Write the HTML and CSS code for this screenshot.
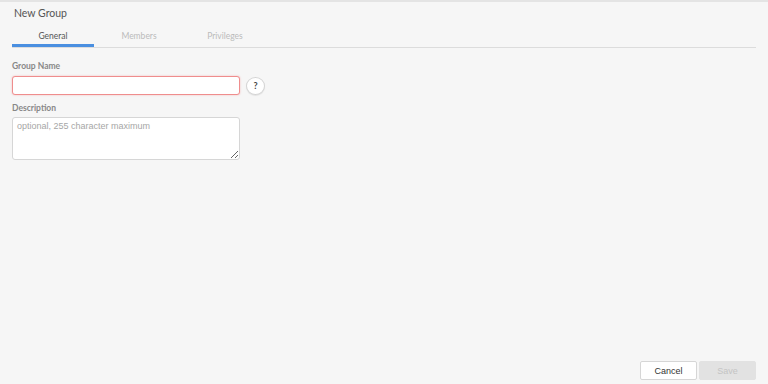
FILE: index.html
```html
<!DOCTYPE html>
<html lang="en">
  <head>
    <meta charset="UTF-8" />
    <meta name="viewport" content="width=device-width, initial-scale=1.0" />
    <title>New Group</title>
    <link rel="stylesheet" href="styles.css">
  </head>

  <body>
    <div class="dialog">
      <div class="header">
        <h1>New Group</h1>
        <div class="tabs">
          <span class="tab active">General</span>
          <span class="tab">Members</span>
          <span class="tab">Privileges</span>
        </div>
      </div>

      <div class="form">
        <label class="field-label" for="group-name">Group Name</label>
        <div class="field-row">
          <input type="text" id="group-name" class="text-input invalid" />
          <button class="help-btn" type="button">?</button>
        </div>

        <label class="field-label" for="description">Description</label>
        <textarea id="description" class="text-area" placeholder="optional, 255 character maximum"></textarea>
      </div>

      <div class="footer">
        <button class="btn" type="button">Cancel</button>
        <button class="btn btn-save" type="button" disabled>Save</button>
      </div>
    </div>
  </body>
</html>
```

FILE: styles.css
```css
html,
body {
  height: 100%;
}

body {
  margin: 0;
  padding: 0;
  background-color: #f6f6f6;
  font-family: "Lato", "Liberation Sans", sans-serif;
}

.dialog {
  box-sizing: border-box;
  height: 100%;
  border-top: 2px solid #e4e4e4;
  display: flex;
  flex-direction: column;
}

.header {
  padding: 4px 12px 0 12px;
}

h1 {
  margin: 0 0 0 2px;
  font-size: 10.5px;
  font-weight: normal;
  color: #555;
  line-height: 14px;
}

.tabs {
  display: flex;
  gap: 4px;
  margin-top: 10px;
  border-bottom: 1px solid #dcdcdc;
}

.tab {
  width: 82px;
  text-align: center;
  font-size: 8.5px;
  color: #bbb;
  line-height: 12px;
  padding-bottom: 2px;
  border-bottom: 3px solid transparent;
}

.tab.active {
  color: #555;
  border-bottom-color: #4a8fe0;
}

.form {
  flex: 1;
  display: flex;
  flex-direction: column;
  align-items: flex-start;
  padding: 12px 12px 0 12px;
}

.field-label {
  font-size: 8.5px;
  font-weight: bold;
  color: #888;
  line-height: 12px;
  margin-bottom: 4px;
}

.field-row {
  display: flex;
  align-items: center;
  gap: 6px;
  margin-bottom: 7px;
}

.field-row + .field-label {
  margin-bottom: 3px;
}

.text-input,
.text-area {
  box-sizing: border-box;
  width: 228px;
  border: 1px solid #d6d6d6;
  border-radius: 3px;
  background-color: #fff;
  margin: 0;
  font-family: "Liberation Sans", Arial, sans-serif;
  font-size: 9px;
}

.text-input {
  height: 19px;
}

.text-input.invalid {
  border-color: #ef8d8d;
  box-shadow: 0 0 2px #f3b5b5;
}

.text-area {
  height: 43px;
  padding: 3px 4px;
  resize: vertical;
}

.text-area::placeholder {
  color: #a6a6a6;
}

.help-btn {
  width: 19px;
  height: 18px;
  padding: 0;
  border: 1px solid #d4d4d4;
  border-radius: 50%;
  background-color: #fff;
  font-family: "Lato", sans-serif;
  font-size: 9px;
  font-weight: bold;
  color: #444;
  box-shadow: 0 1px 1px rgba(0, 0, 0, 0.08);
}

.footer {
  display: flex;
  justify-content: flex-end;
  gap: 2px;
  padding: 0 12px 4px 0;
}

.btn {
  box-sizing: border-box;
  width: 57px;
  height: 19px;
  border: 1px solid #d6d6d6;
  border-radius: 2px;
  background-color: #fff;
  font-family: "Liberation Sans", Arial, sans-serif;
  font-size: 9px;
  color: #333;
  padding: 0;
}

.btn-save {
  border-color: #e2e2e2;
  background-color: #e2e2e2;
  color: #c4c4c4;
}
```
